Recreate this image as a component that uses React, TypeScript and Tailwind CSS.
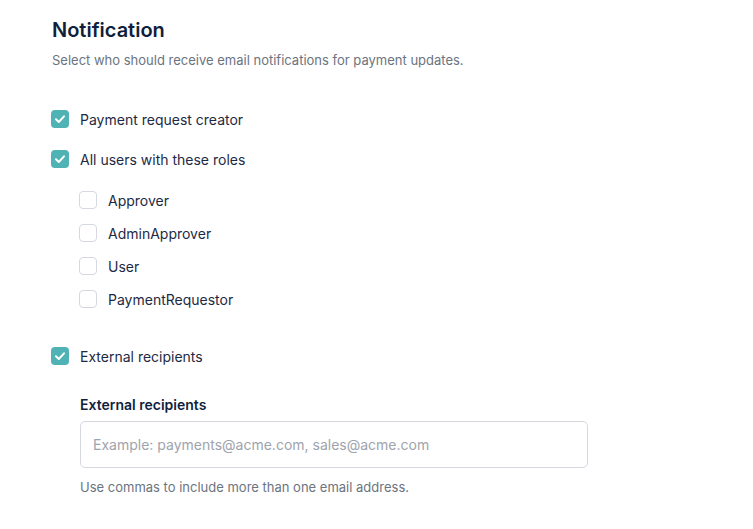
import { useState } from "react";

type Item = { id: string; label: string };

const ROLES: Item[] = [
  { id: "approver", label: "Approver" },
  { id: "admin", label: "AdminApprover" },
  { id: "user", label: "User" },
  { id: "requestor", label: "PaymentRequestor" },
];

function Box({ checked, onClick }: { checked: boolean; onClick: () => void }) {
  return (
    <button
      type="button"
      onClick={onClick}
      className={
        checked
          ? "flex h-[18px] w-[18px] shrink-0 items-center justify-center rounded-[4px] bg-[#4fb3b5]"
          : "flex h-[18px] w-[18px] shrink-0 items-center justify-center rounded-[4px] border border-[#d5d9df] bg-white"
      }
    >
      {checked && (
        <svg width="14" height="14" viewBox="0 0 14 14" fill="none">
          <path d="M3 7.3 L5.8 10 L11 4.3" stroke="white" strokeWidth="2" strokeLinecap="round" strokeLinejoin="round" />
        </svg>
      )}
    </button>
  );
}

function Row({ label, checked, onToggle }: { label: string; checked: boolean; onToggle: () => void }) {
  return (
    <label className="flex h-[18px] items-center gap-[11px] text-[14px] text-[#1d2a44]">
      <Box checked={checked} onClick={onToggle} />
      <span>{label}</span>
    </label>
  );
}

export default function App() {
  const [state, setState] = useState<Record<string, boolean>>({
    creator: true,
    roles: true,
    external: true,
  });
  const toggle = (k: string) => setState((s) => ({ ...s, [k]: !s[k] }));

  return (
    <main
      className="min-h-screen w-full bg-white pl-[51px] pt-[16px]"
      style={{ fontFamily: "Inter, 'Noto Sans', sans-serif" }}
    >
      {/* header */}
      <h2 className="pl-px text-[20px] leading-[28px] font-semibold text-[#0f1f3d]">Notification</h2>
      <p className="mt-[6px] pl-px text-[13px] leading-[20px] text-[#6b7480]">
        Select who should receive email notifications for payment updates.
      </p>

      <div className="mt-[40px] flex flex-col">
        <Row label="Payment request creator" checked={!!state.creator} onToggle={() => toggle("creator")} />
        <div className="mt-[22px]">
          <Row label="All users with these roles" checked={!!state.roles} onToggle={() => toggle("roles")} />
        </div>

        <div className="mt-[23px] flex flex-col gap-[15px] pl-[28px]">
          {ROLES.map((r) => (
            <Row key={r.id} label={r.label} checked={!!state[r.id]} onToggle={() => toggle(r.id)} />
          ))}
        </div>

        <div className="mt-[39px]">
          <Row label="External recipients" checked={!!state.external} onToggle={() => toggle("external")} />
        </div>

        {/* external recipients field */}
        <div className="mt-[30px] pl-[29px]">
          <div className="text-[14px] leading-[20px] font-semibold text-[#0f1f3d]">External recipients</div>
          <input
            type="text"
            placeholder="Example: payments@acme.com, sales@acme.com"
            className="mt-[6px] h-[47px] w-[508px] rounded-[5px] border border-[#d5d9df] px-[12px] text-[14px] text-[#1d2a44] placeholder:text-[#9ea4ad] outline-none"
          />
          <p className="mt-[9px] text-[13px] leading-[20px] text-[#6b7480]">
            Use commas to include more than one email address.
          </p>
        </div>
      </div>
    </main>
  );
}
